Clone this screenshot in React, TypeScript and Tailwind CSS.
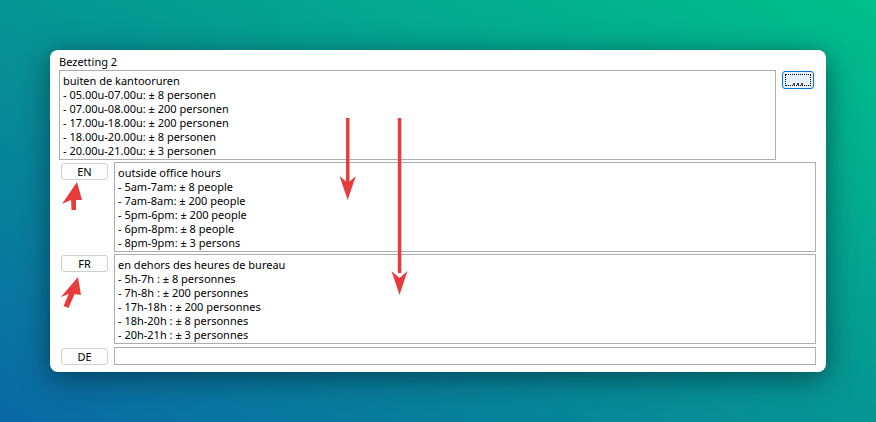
import React from "react";

const nl = [
  "buiten de kantooruren",
  "- 05.00u-07.00u: ± 8 personen",
  "- 07.00u-08.00u: ± 200 personen",
  "- 17.00u-18.00u: ± 200 personen",
  "- 18.00u-20.00u: ± 8 personen",
  "- 20.00u-21.00u: ± 3 personen",
];
const en = [
  "outside office hours",
  "- 5am-7am: ± 8 people",
  "- 7am-8am: ± 200 people",
  "- 5pm-6pm: ± 200 people",
  "- 6pm-8pm: ± 8 people",
  "- 8pm-9pm: ± 3 persons",
];
const fr = [
  "en dehors des heures de bureau",
  "- 5h-7h : ± 8 personnes",
  "- 7h-8h : ± 200 personnes",
  "- 17h-18h : ± 200 personnes",
  "- 18h-20h : ± 8 personnes",
  "- 20h-21h : ± 3 personnes",
];

function TextBox({ lines, tall = true }: { lines: string[]; tall?: boolean }) {
  return (
    <div
      className={`flex-1 border border-[#adadad] bg-white px-[3px] pt-[3px] leading-[14px] text-black ${
        tall ? "h-[90px]" : "h-[18px]"
      }`}
    >
      {lines.map((l) => (
        <div key={l} className="whitespace-pre">
          {l}
        </div>
      ))}
    </div>
  );
}

function LangButton({ label }: { label: string }) {
  return (
    <div className="ml-[2px] mt-[1px] flex h-[17px] w-[47px] shrink-0 items-center justify-center rounded-[3px] border border-[#d0d0d0] bg-[#fdfdfd] leading-none text-black">
      <span className="font-['Noto_Sans',sans-serif] text-[11px] font-normal">{label}</span>
    </div>
  );
}

function LangRow({ label, lines, className = "" }: { label: string; lines: string[]; className?: string }) {
  return (
    <div className={`flex gap-[6px] ${className}`}>
      <LangButton label={label} />
      <TextBox lines={lines} tall={lines.length > 0} />
    </div>
  );
}

export default function App() {
  return (
    <div className="relative h-[422px] w-[876px] overflow-hidden bg-[linear-gradient(to_top_right,#0a68a4,#069592_50%,#00c08a)] font-['Noto_Sans','Liberation_Sans',sans-serif] text-[11px]">
      <div className="absolute left-[50px] top-[50px] flex h-[322px] w-[776px] flex-col rounded-[8px] bg-white pb-[7px] pl-[9px] pr-[10px] shadow-[0_6px_28px_rgba(0,20,40,0.55)]">
        <div className="h-[20px] pt-[5px] leading-[14px] text-black">Bezetting 2</div>

        <div className="flex gap-[6px] pr-[2px]">
          <TextBox lines={nl} />
          <div className="relative mt-[1px] flex h-[18px] w-[32px] shrink-0 items-end justify-center rounded-[3px] border border-[#0078d4] bg-[#e5f1fb] pb-[3px]">
            <span className="pointer-events-none absolute inset-[2px] border border-dotted border-black" />
            <span className="relative z-10 flex gap-[2px]">
              <span className="h-[2px] w-[2px] bg-[#6a4a20]" />
              <span className="h-[2px] w-[2px] bg-[#2a3a7a]" />
              <span className="h-[2px] w-[2px] bg-[#6a4a20]" />
            </span>
          </div>
        </div>

        <LangRow label="EN" lines={en} className="mt-[2px]" />
        <LangRow label="FR" lines={fr} className="mt-[2px]" />
        <LangRow label="DE" lines={[]} className="mt-[3px]" />
      </div>

      {/* annotation arrows */}
      <svg className="pointer-events-none absolute inset-0" width="876" height="422" viewBox="0 0 876 422">
        <g fill="#e83c3c" stroke="none">
          <rect x="346" y="118" width="3.5" height="66" />
          <polygon points="339.5,176 347.7,200 355.8,176 347.7,183" />
          <rect x="397.8" y="118" width="3.5" height="155" />
          <polygon points="391.5,271 399.5,295 407.5,271 399.5,278" />
          <polygon points="77,182 62,204 71,200 82,200" />
          <polygon points="71,198 76,198 76,210 71.5,210" />
          <polygon points="78,277 61,297 70,293.5 81,295" />
          <polygon points="70,291 75.5,292 68.5,308 63.5,306" />
        </g>
      </svg>
    </div>
  );
}
